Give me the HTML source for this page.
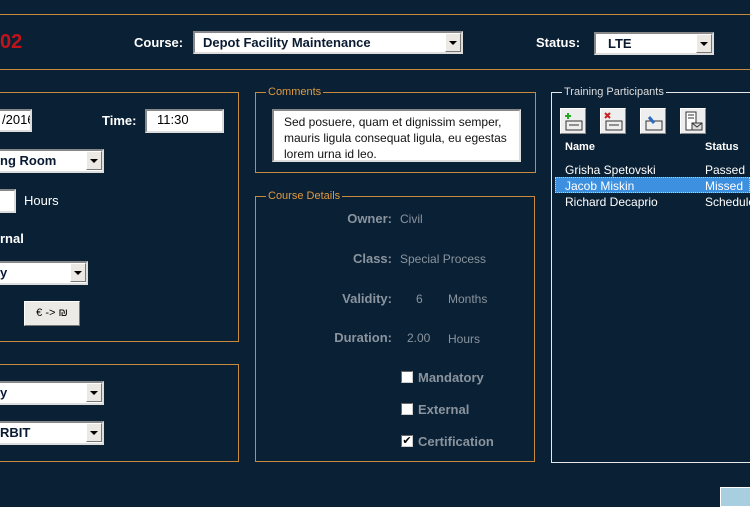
<!DOCTYPE html>
<html><head><meta charset="utf-8"><style>
*{box-sizing:border-box;margin:0;padding:0}
body{width:750px;height:500px;background:#0a2034;position:relative;overflow:hidden;font-family:"Liberation Sans","DejaVu Sans",sans-serif;font-size:12px;color:#fff}
.a{position:absolute}
.hl{position:absolute;left:0;width:750px;height:1px;background:#c98a3c}
.box{position:absolute;border:1px solid #c98a3c}
.fs{position:absolute;border:1px solid #c98a3c}
.lg{position:absolute;top:-7px;left:10px;background:#0a2034;color:#e09a40;font-size:11px;padding:0 2px;line-height:13px}
.inp{position:absolute;background:#fff;border:2px solid;border-color:#888 #ddd #ddd #888;color:#000;font-size:13px;line-height:18px;padding-left:6px;white-space:nowrap;overflow:hidden}
.sel{position:absolute;background:#fff;border:2px solid;border-color:#888 #ddd #ddd #888;color:#0a1a30;font-weight:bold;font-size:13px;line-height:19px;padding-left:8px;white-space:nowrap;overflow:hidden}
.sel b{position:absolute;right:0;top:0;width:16px;height:19px;background:#ece9e4;border:1px solid;border-color:#fff #777 #777 #fff}
.sel b:after{content:"";position:absolute;left:3px;top:7px;border:4px solid transparent;border-top:4px solid #000;border-bottom:0}
.lbl{position:absolute;font-weight:bold;font-size:13px;color:#fff}
.g{position:absolute;color:#8a949e;font-size:12px}
.gb{position:absolute;color:#8a949e;font-size:13px;font-weight:bold;text-align:right}
.cb{position:absolute;width:12px;height:12px;background:#fff;border:1px solid;border-color:#666 #ccc #ccc #666;font-size:11px;line-height:10px;color:#000;text-align:center}
.ib{position:absolute;top:108px;width:26px;height:26px;background:#eee;border:1px solid;border-color:#fff #888 #888 #fff}
</style></head><body>
<div class="hl" style="top:14px"></div>
<div class="hl" style="top:69px"></div>
<div class="a" style="left:0;top:31px;color:#c0141a;font-weight:bold;font-size:20px">02</div>
<div class="lbl" style="left:134px;top:35px">Course:</div>
<div class="sel" style="left:193px;top:31px;width:270px;height:23px">Depot Facility Maintenance<b></b></div>
<div class="lbl" style="left:536px;top:35px">Status:</div>
<div class="sel" style="left:594px;top:32px;width:120px;height:23px;padding-left:12px">LTE<b></b></div>

<div class="box" style="left:-2px;top:92px;width:241px;height:250px"></div>
<div class="inp" style="left:-10px;top:109px;width:42px;height:23px;padding-left:10px">/2016</div>
<div class="lbl" style="left:102px;top:113px">Time:</div>
<div class="inp" style="left:145px;top:109px;width:79px;height:24px;padding-left:10px">11:30</div>
<div class="sel" style="left:-10px;top:149px;width:114px;height:24px">ng Room<b></b></div>
<div class="inp" style="left:-10px;top:189px;width:26px;height:24px"></div>
<div class="a" style="left:24px;top:193px;font-size:13px">Hours</div>
<div class="lbl" style="left:0;top:231px">rnal</div>
<div class="sel" style="left:-10px;top:261px;width:98px;height:24px">y<b></b></div>
<div class="a" style="left:24px;top:301px;width:56px;height:25px;background:#eceae6;border:1px solid;border-color:#fff #777 #777 #fff;color:#000;font-size:11px;text-align:center;line-height:22px">€ -&gt; ₪</div>

<div class="box" style="left:-2px;top:364px;width:241px;height:98px"></div>
<div class="sel" style="left:-10px;top:381px;width:114px;height:24px">y<b></b></div>
<div class="sel" style="left:-10px;top:421px;width:114px;height:24px">RBIT<b></b></div>

<div class="fs" style="left:255px;top:92px;width:281px;height:81px"><div class="lg">Comments</div></div>
<div class="inp" style="left:272px;top:109px;width:249px;height:53px;white-space:normal;font-size:12px;line-height:16px;padding:3px 10px;color:#111">Sed posuere, quam et dignissim semper, mauris ligula consequat ligula, eu egestas lorem urna id leo.</div>

<div class="fs" style="left:255px;top:196px;width:280px;height:266px"><div class="lg">Course Details</div></div>
<div class="gb" style="left:300px;width:92px;top:211px">Owner:</div><div class="g" style="left:400px;top:212px">Civil</div>
<div class="gb" style="left:300px;width:92px;top:251px">Class:</div><div class="g" style="left:400px;top:252px">Special Process</div>
<div class="gb" style="left:300px;width:92px;top:291px">Validity:</div><div class="g" style="left:416px;top:292px">6</div><div class="g" style="left:448px;top:292px">Months</div>
<div class="gb" style="left:300px;width:92px;top:330px">Duration:</div><div class="g" style="left:407px;top:331px">2.00</div><div class="g" style="left:448px;top:332px">Hours</div>
<div class="cb" style="left:401px;top:371px"></div><div class="gb" style="left:418px;top:370px;text-align:left">Mandatory</div>
<div class="cb" style="left:401px;top:403px"></div><div class="gb" style="left:418px;top:402px;text-align:left">External</div>
<div class="cb" style="left:401px;top:435px">✔</div><div class="gb" style="left:418px;top:434px;text-align:left">Certification</div>

<div class="a" style="left:551px;top:92px;width:210px;height:371px;border:1px solid #e8e8e8"><div class="lg" style="color:#ddd;background:#0a2034">Training Participants</div></div>
<div class="ib" style="left:560px"><svg width="24" height="24"><path d="M5 12h16v9H5z" fill="none" stroke="#333"/><path d="M8 16h10" stroke="#333"/><path d="M7 4v6M4 7h6" stroke="#2a2" stroke-width="2"/></svg></div>
<div class="ib" style="left:600px"><svg width="24" height="24"><path d="M5 12h16v9H5z" fill="none" stroke="#333"/><path d="M8 16h10" stroke="#333"/><path d="M4 4l5 5M9 4l-5 5" stroke="#c22" stroke-width="2"/></svg></div>
<div class="ib" style="left:640px"><svg width="24" height="24"><path d="M5 12h16v9H5z" fill="none" stroke="#333"/><path d="M8 8l5 6" stroke="#2a6ac0" stroke-width="3"/></svg></div>
<div class="ib" style="left:680px"><svg width="24" height="24"><path d="M5 3h10v18H5z" fill="#fff" stroke="#333"/><path d="M7 6h6M7 9h6" stroke="#333"/><path d="M11 14h10v7H11z" fill="#ddd" stroke="#333"/><path d="M11 14l5 4 5-4" fill="none" stroke="#333"/></svg></div>
<div class="a" style="left:565px;top:141px;font-weight:bold;font-size:11px">Name</div>
<div class="a" style="left:705px;top:141px;font-weight:bold;font-size:11px">Status</div>
<div class="a" style="left:555px;top:177px;width:195px;height:16px;background:#3d8fe0;border:1px dotted #ccc"></div>
<div class="a" style="left:565px;top:162px;font-size:12px;line-height:16px">Grisha Spetovski<br>Jacob Miskin<br>Richard Decaprio</div>
<div class="a" style="left:705px;top:162px;font-size:12px;line-height:16px;white-space:nowrap">Passed<br>Missed<br>Scheduled</div>
<div class="a" style="left:720px;top:487px;width:40px;height:20px;background:#a8cfe0;border:1px solid #fff"></div>
</body></html>
